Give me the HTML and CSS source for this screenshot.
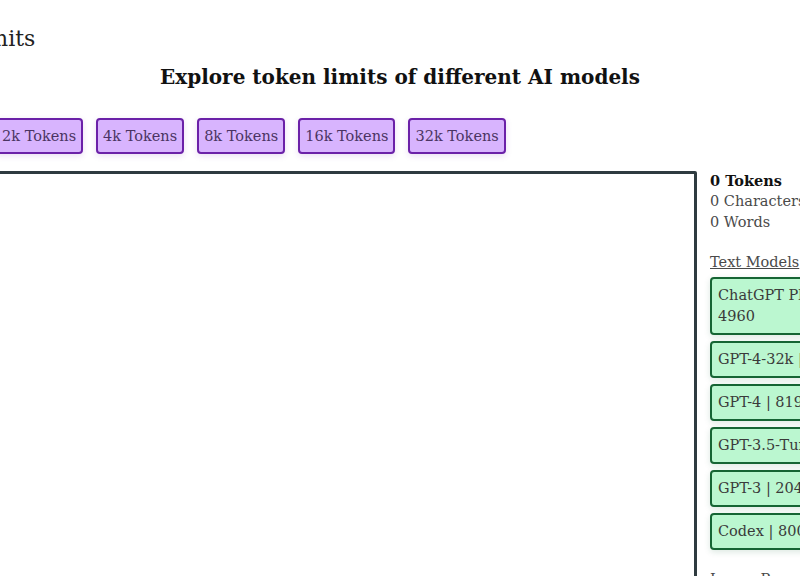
FILE: index.html
```html
<!DOCTYPE html>
<html>
<head>
<meta charset="utf-8">
<link rel="stylesheet" href="styles.css">
</head>
<body>
<div class="page">
  <h1 class="title">Token Limits</h1>
  <h2 class="subtitle">Explore token limits of different AI models</h2>
  <div class="presets">
    <button class="preset">1k Tokens</button>
    <button class="preset">2k Tokens</button>
    <button class="preset">4k Tokens</button>
    <button class="preset">8k Tokens</button>
    <button class="preset">16k Tokens</button>
    <button class="preset">32k Tokens</button>
  </div>
  <div class="main">
    <textarea class="input"></textarea>
    <aside class="side">
      <div class="stats">
        <div class="stat strong">0 Tokens</div>
        <div class="stat">0 Characters</div>
        <div class="stat">0 Words</div>
      </div>
      <div class="group-title">Text Models</div>
      <div class="models">
        <div class="model">ChatGPT Plus (GPT-4) |<br>4960</div>
        <div class="model">GPT-4-32k | 32768</div>
        <div class="model">GPT-4 | 8192</div>
        <div class="model">GPT-3.5-Turbo | 4096</div>
        <div class="model">GPT-3 | 2048</div>
        <div class="model">Codex | 8001</div>
      </div>
      <div class="group-title">Image Prompt</div>
    </aside>
  </div>
</div>
</body>
</html>
```
FILE: styles.css
```css
html, body {
  margin: 0;
  padding: 0;
  background: #fff;
  overflow: hidden;
}
body {
  font-family: "DejaVu Serif", "Liberation Serif", serif;
  color: #4a4a4a;
}
.page {
  width: 1012px;
  margin-left: -106px;
}
.title {
  margin: 24px 0 0 -2px;
  font-size: 22px;
  font-weight: normal;
  line-height: 30px;
  color: #222;
}
.subtitle {
  margin: 8px 0 0 0;
  text-align: center;
  font-size: 20px;
  line-height: 30px;
  font-weight: bold;
  color: #111;
}
.presets {
  display: flex;
  gap: 13px;
  margin-top: 26px;
}
.preset {
  font-family: inherit;
  font-size: 14.5px;
  line-height: 20px;
  color: #4b3463;
  background: #d8b4fe;
  border: 2px solid #6b21a8;
  border-radius: 4px;
  padding: 6px 5px;
  height: 36px;
  box-shadow: 0 2px 6px rgba(107, 33, 168, 0.15);
}
.main {
  display: grid;
  grid-template-columns: 1fr 196px;
  gap: 13px;
  margin-top: 17px;
}
.input {
  height: 500px;
  border: 3px solid #2f3b40;
  border-radius: 2px;
  resize: none;
  margin: 0;
  padding: 0;
  box-sizing: border-box;
}
.side {
  display: flex;
  flex-direction: column;
  font-size: 14.5px;
  line-height: 21px;
  margin-top: -1px;
}
.stat.strong {
  font-weight: bold;
  color: #111;
}
.group-title {
  text-decoration: underline;
  margin-top: 19px;
  margin-bottom: 4px;
}
.models {
  display: flex;
  flex-direction: column;
  gap: 6px;
}
.model {
  white-space: nowrap;
  background: #bbf7d0;
  border: 2px solid #166534;
  border-radius: 4px;
  padding: 6px 6px;
  line-height: 21px;
  color: #3a3a3a;
  box-shadow: 0 2px 6px rgba(22, 101, 52, 0.15);
}
```
